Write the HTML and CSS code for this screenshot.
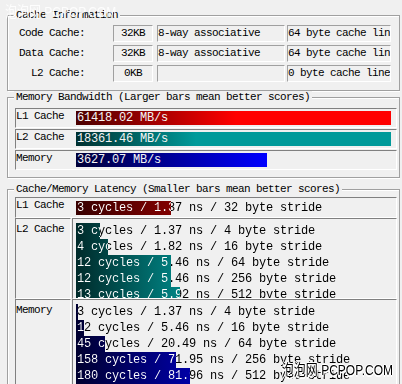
FILE: index.html
```html
<!DOCTYPE html>
<html lang="en">
<head>
  <meta charset="UTF-8">
  <title>Cache &amp; Memory</title>
  <link rel="stylesheet" href="styles.css">
</head>
<body>
  <div class="wm wm-top">泡泡网 PCPOP.COM</div>

  <fieldset class="group info">
    <legend>Cache Information</legend>
    <div class="info-rows">
      <div class="info-row">
        <span class="info-label">Code Cache:</span>
        <span class="box size">32KB</span>
        <span class="box assoc">8-way associative</span>
        <span class="box line">64 byte cache line</span>
      </div>
      <div class="info-row">
        <span class="info-label">Data Cache:</span>
        <span class="box size">32KB</span>
        <span class="box assoc">8-way associative</span>
        <span class="box line">64 byte cache line</span>
      </div>
      <div class="info-row">
        <span class="info-label">L2 Cache:</span>
        <span class="box size">0KB</span>
        <span class="box assoc"></span>
        <span class="box line">0 byte cache line</span>
      </div>
    </div>
  </fieldset>

  <fieldset class="group bandwidth">
    <legend>Memory Bandwidth (Larger bars mean better scores)</legend>
    <div class="bw-rows">
      <div class="bw-row">
        <div class="row-label">L1 Cache</div>
        <div class="bw-track"><div class="bw-bar red" style="width:315px">61418.02 MB/s</div></div>
      </div>
      <div class="bw-row">
        <div class="row-label">L2 Cache</div>
        <div class="bw-track"><div class="bw-bar teal" style="width:315px">18361.46 MB/s</div></div>
      </div>
      <div class="bw-row">
        <div class="row-label">Memory</div>
        <div class="bw-track"><div class="bw-bar blue" style="width:191px">3627.07 MB/s</div></div>
      </div>
    </div>
  </fieldset>

  <fieldset class="group latency">
    <legend>Cache/Memory Latency (Smaller bars mean better scores)</legend>

    <div class="lat-single">
      <div class="row-label">L1 Cache</div>
      <div class="lat-track">
        <div class="lat-line red short" style="--w:95px"><span>3 cycles / 1.37 ns / 32 byte stride</span></div>
      </div>
    </div>

    <div class="lat-block l2">
      <div class="lat-label">L2 Cache</div>
      <div class="lat-bars">
        <div class="lat-line teal" style="--w:24px"><span>3 cycles / 1.37 ns / 4 byte stride</span></div>
        <div class="lat-line teal" style="--w:32px"><span>4 cycles / 1.82 ns / 16 byte stride</span></div>
        <div class="lat-line teal" style="--w:95px"><span>12 cycles / 5.46 ns / 64 byte stride</span></div>
        <div class="lat-line teal" style="--w:95px"><span>12 cycles / 5.46 ns / 256 byte stride</span></div>
        <div class="lat-line teal" style="--w:104px"><span>13 cycles / 5.92 ns / 512 byte stride</span></div>
      </div>
    </div>

    <div class="lat-block mem">
      <div class="lat-label">Memory</div>
      <div class="lat-bars">
        <div class="lat-line blue" style="--w:2px"><span>3 cycles / 1.37 ns / 4 byte stride</span></div>
        <div class="lat-line blue" style="--w:8px"><span>12 cycles / 5.46 ns / 16 byte stride</span></div>
        <div class="lat-line blue" style="--w:29px"><span>45 cycles / 20.49 ns / 64 byte stride</span></div>
        <div class="lat-line blue" style="--w:100px"><span>158 cycles / 71.95 ns / 256 byte stride</span></div>
        <div class="lat-line blue" style="--w:114px"><span>180 cycles / 81.96 ns / 512 byte stride</span></div>
      </div>
    </div>
  </fieldset>

  <div class="wm wm-bottom">泡泡网 PCPOP.COM</div>
</body>
</html>
```

FILE: styles.css
```css
* {
  box-sizing: border-box;
}

html, body {
  height: 384px;
  overflow: hidden;
}

body {
  position: relative;
  margin: 0;
  padding: 9px 0 0 7px;
  width: 400px;
  background: #f0f0f0;
  font-family: 'Liberation Mono', monospace;
  font-size: 11px;
  letter-spacing: -0.6px;
  line-height: 12px;
  color: #000;
}

/* group boxes */
.group {
  margin: 0;
  padding: 0;
  min-width: 0;
  border: 1px solid #a0a0a0;
  box-shadow: inset 1px 1px 0 #fff, 1px 1px 0 #fff;
}

.group legend {
  margin-left: 6px;
  padding: 0 2px;
  line-height: 12px;
  background: #f0f0f0;
}

.info {
  padding-bottom: 8px;
}

.bandwidth {
  padding-bottom: 7px;
}

.latency {
  margin-top: 5px;
  height: 220px;
}

/* cache information */
.info-rows {
  margin-top: 4px;
  display: flex;
  flex-direction: column;
  gap: 3px;
}

.info-row {
  display: flex;
  height: 17px;
}

.info-label {
  width: 77px;
  margin-right: 28px;
  text-align: right;
  white-space: nowrap;
  line-height: 17px;
}

.box {
  display: block;
  height: 17px;
  line-height: 15px;
  border: 1px solid;
  border-color: #a0a0a0 #fff #fff #a0a0a0;
  white-space: nowrap;
  overflow: hidden;
}

.box.size {
  width: 40px;
  text-align: center;
  margin-right: 4px;
}

.box.assoc {
  width: 128px;
  margin-right: 2px;
}

.box.line {
  width: 104px;
}

/* bandwidth */
.bw-rows {
  margin: 5px 2px 0 7px;
  display: flex;
  flex-direction: column;
  gap: 1px;
}

.bw-row,
.lat-single {
  display: flex;
  height: 20px;
  border: 1px solid;
  border-color: #808080 #fff #fff #808080;
}

.row-label {
  width: 60px;
  padding-top: 1px;
  white-space: nowrap;
}

.bw-track {
  padding-top: 2px;
}

.bw-bar {
  height: 14px;
  padding-left: 1px;
  font-size: 12px;
  letter-spacing: -0.2px;
  line-height: 14px;
  color: #f4f4f4;
  white-space: nowrap;
}

.bw-bar.red {
  background: linear-gradient(to right, #4a0000, #ff0000 160px);
}

.bw-bar.teal {
  background: linear-gradient(to right, #003030, #009a9a 120px);
}

.bw-bar.blue {
  background: linear-gradient(to right, #000038, #0000ff 191px);
}

/* latency */
.lat-single {
  height: 21px;
  margin: 2px 2px 0 7px;
}

.lat-track {
  padding-top: 3px;
}

.lat-block {
  display: flex;
  gap: 1px;
  margin: 0 2px 0 7px;
}

.lat-block.l2 {
  height: 81px;
}

.lat-block.mem {
  height: 110px;
}

.lat-label,
.lat-bars {
  border: 1px solid;
  border-color: #808080 #fff #fff #808080;
}

.lat-label {
  width: 56px;
  padding-top: 4px;
  white-space: nowrap;
}

.lat-bars {
  flex: 1;
  padding: 4px 0 0 3px;
  overflow: hidden;
}

.lat-line {
  height: 16px;
  background-repeat: no-repeat;
  background-size: var(--w) 100%;
}

.lat-line.short {
  height: 14px;
}

.lat-line.red {
  background-image: linear-gradient(to right, #380000, #ff0000 260px);
}

.lat-line.teal {
  background-image: linear-gradient(to right, #002a2a, #009a9a 130px);
}

.lat-line.blue {
  background-image: linear-gradient(to right, #000030, #0000ff 200px);
}

.lat-line span {
  display: block;
  padding-left: 1px;
  font-size: 12px;
  letter-spacing: -0.2px;
  line-height: 16px;
  white-space: nowrap;
  color: transparent;
  background: linear-gradient(to right, #fff var(--w), #000 var(--w));
  -webkit-background-clip: text;
  background-clip: text;
}

.lat-line.short span {
  line-height: 14px;
}

/* watermarks */
.wm {
  position: absolute;
  font-family: 'Liberation Sans', 'Noto Sans CJK SC', sans-serif;
  font-size: 12px;
  letter-spacing: 0;
  line-height: 13px;
  white-space: nowrap;
  transform: scaleY(1.25);
}

.wm-top {
  left: 5px;
  top: 4px;
  transform-origin: left top;
  color: rgba(255, 255, 255, 0.85);
}

.wm-bottom {
  right: 7px;
  bottom: 5px;
  transform-origin: right bottom;
  color: #000;
  text-shadow: 1px 0 0 #fff, -1px 0 0 #fff, 0 1px 0 #fff, 0 -1px 0 #fff;
}
```
